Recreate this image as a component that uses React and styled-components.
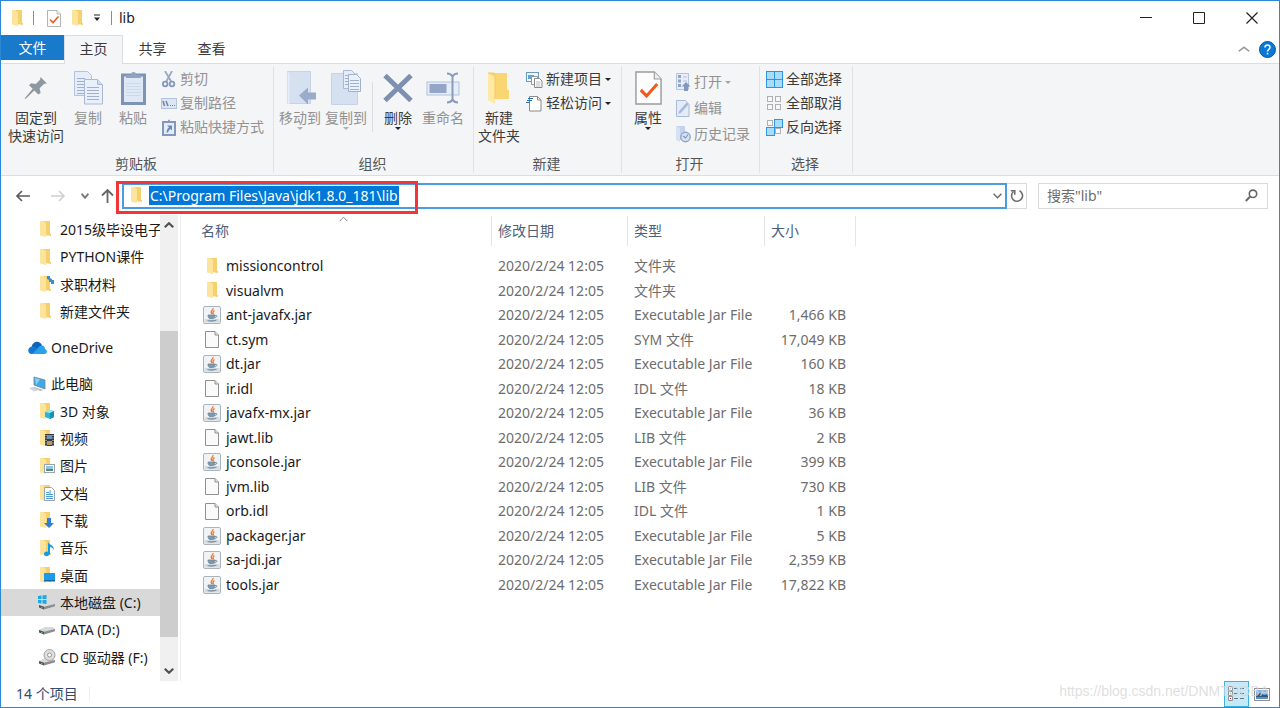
import React from "react";
import styled, { createGlobalStyle } from "styled-components";

const GlobalStyle = createGlobalStyle`
  *, *::before, *::after { box-sizing: border-box; }
  html, body { margin: 0; background: #fff; }
  body, button, input, table {
    font-family: "Noto Sans", "Noto Sans CJK SC", sans-serif;
    font-size: 14px;
    line-height: 18px;
  }
  button { border: 0; padding: 0; background: none; color: inherit; }
  svg { display: block; flex: none; }
`;

const Window = styled.div`
  display: flex;
  flex-direction: column;
  height: 100vh;
  min-height: 480px;
  border: 1px solid #2b88d8;
  background: #fff;
  color: #1a1a1a;
  overflow: hidden;
`;

/* ---------- title bar ---------- */
const TitleBar = styled.header`
  display: flex;
  align-items: center;
  height: 34px;
  padding: 0 1px 0 10px;
  flex: none;
`;
const QuickBar = styled.div`
  display: flex;
  align-items: center;
  gap: 13px;
  flex: 1;
`;
const QuickSet = styled.div`
  display: flex;
  align-items: center;
  gap: 10px;
`;
const QuickDivider = styled.span`
  width: 1px;
  height: 14px;
  background: #8c8c8c;
`;
const QuickButton = styled.button`
  display: flex;
`;
const Title = styled.h1`
  margin: 0 0 0 -3px;
  font-size: 14px;
  font-weight: 400;
  line-height: 18px;
`;
const CaptionButton = styled.button`
  display: flex;
  align-items: center;
  justify-content: center;
  width: 53px;
  height: 34px;
`;

/* ---------- tabs ---------- */
const TabRow = styled.nav`
  display: flex;
  height: 28px;
  flex: none;
  padding-right: 3px;
`;
const FileTab = styled.button`
  width: 63px;
  height: 25px;
  background: #1979ca;
  color: #fff;
`;
const Tab = styled.button`
  width: 59px;
  height: ${(p) => (p.$active ? 29 : 28)}px;
  padding-bottom: 2px;
  position: relative;
  color: #3b3b3b;
  border: 1px solid ${(p) => (p.$active ? "#dcdddf" : "transparent")};
  border-bottom: 0;
  background: ${(p) => (p.$active ? "#f4f5f7" : "transparent")};
`;
const TabTools = styled.div`
  display: flex;
  align-items: center;
  gap: 9px;
  margin-left: auto;
`;

/* ---------- ribbon ---------- */
const Ribbon = styled.section`
  display: flex;
  flex: none;
  height: 113px;
  padding: 2px 0;
  background: #f4f5f7;
  border-top: 1px solid #dcdddf;
  border-bottom: 1px solid #dcdddf;
`;
const Group = styled.div`
  display: flex;
  flex-direction: column;
  width: ${(p) => p.$width}px;
  border-right: 1px solid #e1e2e4;
`;
const GroupBody = styled.div`
  display: flex;
  flex: 1;
  padding-left: ${(p) => p.$inset || 0}px;
`;
const GroupLabel = styled.div`
  padding-right: 2px;
  line-height: 18px;
  text-align: center;
  color: #555;
`;
const BigButton = styled.button`
  display: flex;
  flex-direction: column;
  align-items: center;
  width: ${(p) => p.$width}px;
  padding-top: 4px;
  color: ${(p) => (p.$off ? "#929292" : "#3b3b3b")};
  white-space: nowrap;
`;
const BigIcon = styled.span`
  display: flex;
  align-items: center;
  justify-content: center;
  height: 36px;
  margin-bottom: 3px;
`;
const ButtonStack = styled.div`
  display: flex;
  flex-direction: column;
  align-items: flex-start;
  padding-top: ${(p) => p.$top || 1}px;
  margin-left: ${(p) => p.$left || 0}px;
`;
const SmallButton = styled.button`
  display: flex;
  align-items: center;
  gap: 3px;
  height: ${(p) => p.$height || 24}px;
  color: ${(p) => (p.$off ? "#929292" : "#3b3b3b")};
  white-space: nowrap;
`;
const InnerDivider = styled.span`
  width: 1px;
  height: 50px;
  margin: 16px 3px 0;
  background: #dcdddf;
`;

/* ---------- address row ---------- */
const AddressRow = styled.div`
  display: flex;
  align-items: center;
  flex: none;
  height: 39px;
  padding: 0 11px 0 14px;
`;
const NavButtons = styled.div`
  display: grid;
  grid-template-columns: 35px 31px 20px 13px;
  align-items: center;
  margin-right: 8px;
`;
const AddressBox = styled.div`
  position: relative;
  display: flex;
  align-items: center;
  flex: 1;
  height: 26px;
  padding: 0 3px 0 6px;
  border: 2px solid #4a9be0;
`;
const AddressInput = styled.input`
  field-sizing: content;
  height: 19px;
  margin: 0 auto 0 7px;
  padding: 0 1px;
  border: 0;
  outline: 0;
  background: #0078d7;
  color: #fff;
`;
const RedFrame = styled.div`
  position: absolute;
  left: -8px;
  top: -4px;
  width: 302px;
  height: 33px;
  border: 3px solid #f5343a;
  pointer-events: none;
`;
const RefreshButton = styled.button`
  display: flex;
  align-items: center;
  justify-content: center;
  width: 20px;
  height: 26px;
  border: 1px solid #d9d9d9;
  border-left: 0;
`;
const SearchBox = styled.label`
  display: flex;
  align-items: center;
  width: 230px;
  height: 26px;
  margin-left: 11px;
  padding: 0 9px 0 8px;
  border: 1px solid #d9d9d9;
`;
const SearchInput = styled.input`
  flex: 1;
  min-width: 0;
  padding: 0;
  border: 0;
  outline: 0;
  &::placeholder { color: #6d6d6d; opacity: 1; }
`;

/* ---------- body ---------- */
const Body = styled.main`
  display: flex;
  flex: 1;
  min-height: 0;
`;
const Sidebar = styled.aside`
  display: flex;
  width: 180px;
  flex: none;
  padding-right: 2px;
  border-right: 1px solid #f0f0f0;
`;
const Tree = styled.ul`
  flex: 1;
  min-width: 0;
  margin: 0;
  padding: 1px 0 0;
  list-style: none;
  overflow: hidden;
`;
const TreeItem = styled.li`
  display: flex;
  align-items: center;
  gap: 4px;
  height: ${(p) => (p.$tall ? 28 : 27)}px;
  margin-top: ${(p) => (p.$gap ? 9 : 0)}px;
  padding-left: ${(p) => (p.$root ? 27 : 36)}px;
  background: ${(p) => (p.$selected ? "#d9d9d9" : "transparent")};
  white-space: nowrap;
  overflow: hidden;
`;
const TreeIcon = styled.span`
  display: flex;
  justify-content: center;
  width: 19px;
  flex: none;
`;
const ScrollBar = styled.div`
  display: flex;
  flex-direction: column;
  width: 18px;
  flex: none;
  background: #f0f0f0;
`;
const ScrollArrow = styled.button`
  display: flex;
  align-items: center;
  justify-content: center;
  height: 20px;
  flex: none;
`;
const ScrollTrack = styled.div`
  display: flex;
  flex-direction: column;
  justify-content: flex-end;
  flex: 1;
  padding-bottom: 24px;
`;
const ScrollThumb = styled.div`
  height: 76%;
  background: #cdcdcd;
`;

const Files = styled.div`
  flex: 1;
  min-width: 0;
  overflow: hidden;
`;
const FileTable = styled.table`
  width: 675px;
  table-layout: fixed;
  border-collapse: collapse;
  color: #6d6d6d;
`;
const HeadCell = styled.th`
  padding: 1px 0 8px;
  font-weight: 400;
  text-align: left;
  color: #4c607a;
`;
const HeadInner = styled.div`
  position: relative;
  height: 30px;
  padding-left: ${(p) => (p.$first ? 20 : 6)}px;
  border-right: 1px solid #e5e5e5;
  line-height: 30px;
`;
const SortMark = styled.span`
  position: absolute;
  top: 0;
  left: 51%;
`;
const FileRow = styled.tr`
  height: 24px;
  &:nth-child(even) { height: 25px; }
`;
const Cell = styled.td`
  padding: 0 10px 0 6px;
  text-align: ${(p) => (p.$right ? "right" : "left")};
  white-space: nowrap;
`;
const NameCell = styled.td`
  padding: 0 0 0 21px;
  color: #1a1a1a;
`;
const NameInner = styled.div`
  display: flex;
  align-items: center;
  gap: 5px;
`;
const FileIcon = styled.span`
  display: flex;
  justify-content: center;
  width: 19px;
`;

/* ---------- status bar ---------- */
const StatusBar = styled.footer`
  position: relative;
  display: flex;
  align-items: center;
  flex: none;
  height: 26px;
  padding: 0 9px 0 15px;
  color: #33486b;
`;
const StatusDivider = styled.span`
  width: 1px;
  height: 14px;
  margin-left: 11px;
  background: #eee;
`;
const ViewButtons = styled.div`
  display: flex;
  align-items: center;
  gap: 4px;
  margin-left: auto;
`;
const ViewButton = styled.button`
  display: flex;
  align-items: center;
  justify-content: center;
  height: 26px;
  width: ${(p) => (p.$on ? 25 : 17)}px;
  background: ${(p) => (p.$on ? "#c5e9f8" : "transparent")};
  border: ${(p) => (p.$on ? "1px solid #3db2e0" : "0")};
`;
const Watermark = styled.span`
  position: absolute;
  right: 10px;
  top: 1px;
  font-family: "Liberation Sans", sans-serif;
  font-size: 14px;
  color: rgba(215, 215, 215, 0.8);
  pointer-events: none;
`;

/* ---------- icons ---------- */
const FolderShape = () => (
  <>
    <path d="M3 0h8v13h1v2l-7-1z" fill="#f5d06d" />
    <path d="M1 0h3l3 2v14L1 14.500z" fill="#fce49d" />
  </>
);
const Folder = ({ children, width = 12 }) => (
  <svg width={width} height="17" viewBox={`0 0 ${width} 17`}>
    <FolderShape />
    {children}
  </svg>
);
const BigFolder = () => (
  <svg width="24" height="32" viewBox="0 0 24 32">
    <path d="M1 1h19v17h2v9H6z" fill="#fad673" />
    <path d="M1 1l7 4v27l-7-4z" fill="#ffe9a4" />
    <path d="M1 1h6l1 4v22" fill="none" stroke="#f2cb62" />
  </svg>
);
const Caret = ({ color = "#333" }) => (
  <svg width="6" height="3" viewBox="0 0 6 3"><path d="M0 0h6L3 3z" fill={color} /></svg>
);
const Chevron = ({ dir = "down", color = "#666", size = 9, weight = 1.3 }) => (
  <svg width={size} height="6" viewBox="0 0 9 6" preserveAspectRatio="none">
    <path d={dir === "down" ? "M.6.8 4.500 4.800 8.400.8" : "M.6 5.200 4.500 1.200 8.400 5.200"} fill="none" stroke={color} strokeWidth={weight} />
  </svg>
);
const CheckDoc = ({ w = 14, h = 17 }) => (
  <svg width={w} height={h} viewBox="0 0 28 34" preserveAspectRatio="none">
    <path d="M1 1h19l7 7v25H1z" fill="#fdfdfd" stroke="#9b9b9b" strokeWidth="1.500" />
    <path d="M20 1v7h7" fill="#eee" stroke="#9b9b9b" strokeWidth="1.200" />
    <path d="M6 19l6 6 11-12" fill="none" stroke="#f05a1c" strokeWidth="3.200" />
  </svg>
);
const Pin = () => (
  <svg width="24" height="24" viewBox="0 0 24 24">
    <path d="M16.500 1 23 7.500l-2.800.3-4.600 4.500 1 4.600-2.300 1.700-4-4L1.500 23 .8 22.300 8.700 12.800 5 9.200l2-2 4.800.8 4.300-4.300z" fill="#8f979f" />
  </svg>
);
const sheetLines = (x, y, w, n, c = "#9fb0cc") =>
  Array.from({ length: n }, (_, i) => <path key={`${x}${i}`} d={`M${x} ${y + i * 3}h${w}`} stroke={c} />);
const CopyIcon = () => (
  <svg width="29" height="34" viewBox="0 0 29 34">
    <path d="M.5.5h13l4 4v20H.5z" fill="#e6edf8" stroke="#b3c3de" />
    {sheetLines(3, 7.5, 8, 6)}
    <path d="M10.500 8.500h13l5 5v19.500h-18z" fill="#e9f0fa" stroke="#a9b9d6" />
    <path d="M23.500 8.500v5h5" fill="#cfdbed" stroke="#a9b9d6" />
    {sheetLines(13, 16.5, 12, 5)}
  </svg>
);
const PasteIcon = () => (
  <svg width="25" height="34" viewBox="0 0 25 34">
    <rect x="1.500" y="4" width="22" height="28.500" fill="#dfe9f6" stroke="#7f93b5" strokeWidth="3" />
    <path d="M5 12.500h15M5 15.500h15M5 18.500h15M5 21.500h15M5 24.500h15" stroke="#cddaec" />
    <path d="M5 7V4h5a2.500 3 0 0 1 5 0h5v3z" fill="#91a3c2" />
  </svg>
);
const ScissorsIcon = () => (
  <svg width="16" height="17" viewBox="0 0 16 17">
    <path d="M4 0l6.500 11M11 0L5 11" stroke="#9aa9c4" strokeWidth="1.800" />
    <circle cx="4.200" cy="13" r="2.300" fill="none" stroke="#8497ba" strokeWidth="1.800" />
    <circle cx="11" cy="13" r="2.300" fill="none" stroke="#8497ba" strokeWidth="1.800" />
  </svg>
);
const PathIcon = () => (
  <svg width="16" height="11" viewBox="0 0 16 11">
    <rect x=".5" y=".5" width="15" height="10" fill="#dce6f4" stroke="#b5c4dd" />
    <path d="M2 3l1.500 5M5 3l2 5" stroke="#6d83aa" strokeWidth="1.500" />
    <path d="M9 7.500h1M11 7.500h1M13 7.500h1" stroke="#6d83aa" />
  </svg>
);
const ShortcutIcon = () => (
  <svg width="16" height="17" viewBox="0 0 16 17">
    <rect x="2" y="3" width="12" height="13" fill="#e3ecf8" stroke="#8297bb" strokeWidth="2" />
    <path d="M5 4V2h2a1 1.500 0 0 1 2 0h2v2z" fill="#8297bb" />
    <path d="M6 6.500h5v5L9.500 10c-1.500 1-2 2-2.500 3.500H5.500C5.500 11 6.500 9.500 8 8.500z" fill="#7188b3" />
  </svg>
);
const MoveIcon = () => (
  <svg width="31" height="34" viewBox="0 0 31 34">
    <path d="M2.500.5h23v32h-23z" fill="#d5e1f1" stroke="#c5d3e8" />
    <path d="M2.500.5l2 2v31l-2-1z" fill="#e5edf8" />
    <path d="M14 24.500l9-8v5h8v7h-8v5z" fill="#9bacca" />
  </svg>
);
const CopyToIcon = () => (
  <svg width="31" height="36" viewBox="0 0 31 36">
    <path d="M.5 3.500h26v31H.5z" fill="#d5e1f1" stroke="#c5d3e8" />
    <path d="M12.500.5h8l3 3v15h-11z" fill="#e6edf8" stroke="#a9b9d6" />
    {sheetLines(14, 5.5, 6, 4)}
    <path d="M17.500 4.500h8l4 4v13h-12z" fill="#eaf0fa" stroke="#a0b1ce" />
    {sheetLines(19, 10.5, 9, 4)}
  </svg>
);
const DeleteIcon = () => (
  <svg width="30" height="30" viewBox="0 0 30 30">
    <path d="M2 2.500l26 25M28 2.500l-26 25" stroke="#7e90b0" strokeWidth="5" />
  </svg>
);
const RenameIcon = () => (
  <svg width="34" height="32" viewBox="0 0 34 32">
    <rect x="1" y="10" width="32" height="13" fill="#e4edf8" stroke="#b2c2dc" />
    <rect x="3.500" y="12" width="17" height="9" fill="#93a6c7" />
    <path d="M21 1.500c3 0 4.500 1 5.500 3 1-2 2.500-3 5.500-3M21 30.500c3 0 4.500-1 5.500-3 1 2 2.500 3 5.500 3M26.500 4v24" fill="none" stroke="#899cbd" strokeWidth="2" />
  </svg>
);
const NewItemIcon = () => (
  <svg width="17" height="17" viewBox="0 0 17 17">
    <rect x=".5" y="1.500" width="12" height="9" fill="#eef5fa" stroke="#6f9ab5" />
    <path d="M2 4h6v4H2z" fill="#5aa6cf" />
    <path d="M5.500 5.500h6v8h-6z" fill="#fff" stroke="#999" />
    <path d="M8.500 7.500h5l2.500 2.500v6.500H8.500z" fill="#fff" stroke="#8a8a8a" />
    <path d="M10 11h4.500M10 13h4.500M10 15h4.500" stroke="#bbb" />
  </svg>
);
const EasyAccessIcon = () => (
  <svg width="17" height="17" viewBox="0 0 17 17">
    <path d="M3.500 1.500h8l3.500 3.500v11H3.500z" fill="#fff" stroke="#8a8a8a" />
    <path d="M11.500 1.500V5H15" fill="none" stroke="#8a8a8a" />
    <path d="M2 3.500h5M1 5.500h5M0 7.500h4" stroke="#2c6fa5" />
  </svg>
);
const OpenIcon = () => (
  <svg width="16" height="18" viewBox="0 0 16 18">
    <path d="M1.500.5h12v16h-12z" fill="#e7eef8" stroke="#b4c3dc" />
    <path d="M3 2h3v3H3zM3 6.500h3v3H3zM3 11h3v3H3z" fill="#8fa4c6" />
    <path d="M8 4h4M8 8h4" stroke="#b0c0da" />
    <path d="M11 9l4.500 4.500H13V18H9v-4.500H6.500z" fill="#8197bd" />
  </svg>
);
const EditIcon = () => (
  <svg width="16" height="17" viewBox="0 0 16 17">
    <path d="M1.500.5h9l3.500 3.500v12.500H1.500z" fill="#e4ecf8" stroke="#a9bad7" />
    <path d="M3 14l1-3 8-9 2 2-8 9z" fill="#a5b9db" stroke="#d9e4f4" strokeWidth=".5" />
  </svg>
);
const HistoryIcon = () => (
  <svg width="16" height="18" viewBox="0 0 16 18">
    <path d="M1 1h9v14H4z" fill="#c3d3ec" />
    <path d="M1 1l4 2v14l-4-2z" fill="#d6e2f3" />
    <circle cx="10.500" cy="12" r="4.700" fill="#d6e2f4" stroke="#91a5c8" strokeWidth="1.400" />
    <path d="M8 11l2.500 2 2.500-3.500" fill="none" stroke="#7f95bd" strokeWidth="1.200" />
  </svg>
);
const SelectIcon = ({ filled }) => (
  <svg width="17" height="17" viewBox="0 0 17 17">
    {[[0, 0], [8, 0], [0, 8], [8, 8]].map(([x, y], i) => {
      const on = filled.includes(i);
      return on ? (
        <rect key={i} x={x + 0.5} y={y + 0.5} width="8" height="8" fill="#a8dcfb" stroke="#2d96dc" />
      ) : (
        <rect key={i} x={x + 1.5} y={y + 1.5} width="5" height="5" fill="#f8f8f8" stroke="#b0b0b0" />
      );
    })}
  </svg>
);
const Arrow = ({ color, back }) => (
  <svg width="16" height="12" viewBox="0 0 16 12">
    <path d={back ? "M15 6H2M7 1L2 6l5 5" : "M1 6h13M9 1l5 5-5 5"} fill="none" stroke={color} strokeWidth="1.600" />
  </svg>
);
const UpArrow = () => (
  <svg width="13" height="15" viewBox="0 0 13 15">
    <path d="M6.500 15V2M1 7.500L6.500 2 12 7.500" fill="none" stroke="#666" strokeWidth="1.800" />
  </svg>
);
const Cloud = () => (
  <svg width="19" height="13" viewBox="0 0 19 13">
    <path d="M3.500 5.500C5 0 12-1 14 4.500L10 8z" fill="#0a64b8" />
    <path d="M4 13C-1 13-1 6 4 5.500c2-.5 4 .5 9 5L6 13z" fill="#0f79d4" />
    <path d="M10 7.500c1-4 7-4 7 .500 3 1 2 5-.5 5H4z" fill="#28a2ea" />
  </svg>
);
const Computer = () => (
  <svg width="19" height="16" viewBox="0 0 19 16">
    <path d="M6 1l11 3v9L6 9z" fill="#3ea8ea" stroke="#6c8796" strokeWidth=".8" />
    <path d="M7 2l5 1.400L8 9z" fill="#8bd0f7" />
    <path d="M6 11l9 3-2 1-8-2.500z" fill="#aab4bb" />
    <path d="M1 12.500l4-1.500 6 2.500-4 2z" fill="#ccd3d8" />
  </svg>
);
const DriveShape = ({ y = 0 }) => (
  <g transform={`translate(0 ${y})`}>
    <path d="M1 6l6-3h8l2 2.500v1.500L6 10l-5-2z" fill="#d8d9da" />
    <path d="M6 7.700L17 5v2.200L6 10.500z" fill="#8b8d8f" />
    <path d="M1 6l5 1.700v2.800L1 8.500z" fill="#4f5254" />
    <path d="M3 8.300l1.500.5" stroke="#62cf66" />
  </g>
);
const Drive = () => <svg width="18" height="12" viewBox="0 0 18 12"><DriveShape /></svg>;
const WinDrive = () => (
  <svg width="18" height="15" viewBox="0 0 18 15">
    <DriveShape y={4} />
    <path d="M0 1l3.500-.5V4H0zM4.500.4L8.500 0v4h-4zM0 5h3.500v3.500L0 8zM4.500 5h4v4l-4-.5z" fill="#1ea7e1" />
  </svg>
);
const CdDrive = () => (
  <svg width="18" height="17" viewBox="0 0 18 17">
    <DriveShape y={6} />
    <circle cx="11.500" cy="6" r="5.500" fill="#dedede" stroke="#a4a4a4" />
    <circle cx="11.500" cy="6" r="2" fill="#fff" stroke="#999" />
  </svg>
);
const FolderBadge = ({ children }) => <Folder width={16}>{children}</Folder>;
const badges = {
  link: <><path d="M8 0h3v2l2 1v3h-3V4L8 3z" fill="#3d8fd4" /><path d="M12 4h3v4h-3z" fill="#3d8fd4" /></>,
  cube: <><path d="M6 9l4-2 5 1v6l-4 2-5-2z" fill="#29b5d3" /><path d="M6 9l4-2 5 1-4 2z" fill="#a7e8f2" /><path d="M11 10v6l4-2V8z" fill="#1093b5" /></>,
  film: <><path d="M6 4h9v12H6z" fill="#333b44" /><path d="M8 5h5v4H8z" fill="#6f8fb8" /><path d="M8 11h5v4H8z" fill="#b39a59" /><path d="M7 5v11M14 5v11" stroke="#ddd" strokeDasharray="1 1.500" /></>,
  image: <><rect x="5.500" y="6.500" width="10" height="8" fill="#fff" stroke="#9aa4ab" /><path d="M7 8h7v3H7z" fill="#8fc6e8" /><path d="M7 11h7v2H7z" fill="#598a78" /></>,
  doc: <><path d="M5.500 2.500h7l3 3v10h-10z" fill="#fff" stroke="#97a3ac" /><path d="M7 7.500h3M7 9.500h7M7 11.500h7M7 13.500h7M11 5v4" stroke="#4a9ad4" /></>,
  down: <path d="M8 6h4v5h3l-5 5-5-5h3z" fill="#2d7fd0" />,
  note: <path d="M9 2c1 3 6 3 6 8-1-2-3-3-4-3v6c0 4-6 4-6 1 0-2 2-3 4-2z" fill="#159be6" />,
  desk: <><path d="M5 6h11v8H5z" fill="#1b9ae8" /><path d="M5 13h11v1.500H5z" fill="#1765a5" /></>,
};
const JarIcon = () => (
  <svg width="18" height="18" viewBox="0 0 18 18">
    <rect x=".5" y=".5" width="17" height="17" rx="1.500" fill="#f0f3f5" stroke="#a9b4bc" />
    <path d="M1.500 13h15v3.500h-15z" fill="#d3dbe0" />
    <path d="M10 2c1 2-4 3-1 6M11.500 4.500c-2 1-2 2-1 4" fill="none" stroke="#ec7b35" strokeWidth="1.300" />
    <path d="M5 9h7c0 2-.5 3-1.500 3.500h-4C5.500 12 5 11 5 9zM4.500 14.500c2 1 6 1 9-.500" fill="#7f98ab" stroke="#6c8799" strokeWidth=".8" />
    <path d="M12 9.500c3-.5 2 2-.5 2.500" fill="none" stroke="#6c8799" />
  </svg>
);
const PageIcon = () => (
  <svg width="14" height="17" viewBox="0 0 14 17">
    <path d="M.5.5h9.500l3.500 3.500v12.500H.5z" fill="#fafafa" stroke="#919191" />
    <path d="M10 .5V4h3.500" fill="#e4e4e4" stroke="#919191" />
  </svg>
);
const Magnifier = () => (
  <svg width="13" height="13" viewBox="0 0 13 13">
    <circle cx="8" cy="4.800" r="3.700" fill="none" stroke="#666" strokeWidth="1.600" />
    <path d="M5.200 7.500L.8 12" stroke="#666" strokeWidth="1.900" />
  </svg>
);
const RefreshIcon = () => (
  <svg width="14" height="14" viewBox="0 0 14 14">
    <path d="M9.500 1.800A5.500 5.500 0 1 1 3.500 2.500" fill="none" stroke="#6c6c6c" strokeWidth="1.600" />
    <path d="M.8 1.800h4v4" fill="none" stroke="#6c6c6c" strokeWidth="1.500" />
  </svg>
);
const HelpIcon = () => (
  <svg width="17" height="17" viewBox="0 0 17 17">
    <circle cx="8.500" cy="8.500" r="8" fill="#0a78d6" stroke="#075aa5" />
    <path d="M6 6.500c0-3.300 5-3.300 5 0 0 1.700-2.500 2-2.500 4M8.500 11.800v1.700" fill="none" stroke="#e6f2fc" strokeWidth="1.600" />
  </svg>
);

const treeItems = [
  { label: "2015级毕设电子", icon: <Folder width={16} /> },
  { label: "PYTHON课件", icon: <Folder width={16} />, tall: true },
  { label: "求职材料", icon: <FolderBadge>{badges.link}</FolderBadge> },
  { label: "新建文件夹", icon: <Folder width={16} /> },
  { label: "OneDrive", icon: <Cloud />, root: true, gap: true },
  { label: "此电脑", icon: <Computer />, root: true, gap: true, tall: true },
  { label: "3D 对象", icon: <FolderBadge>{badges.cube}</FolderBadge> },
  { label: "视频", icon: <FolderBadge>{badges.film}</FolderBadge> },
  { label: "图片", icon: <FolderBadge>{badges.image}</FolderBadge>, tall: true },
  { label: "文档", icon: <FolderBadge>{badges.doc}</FolderBadge> },
  { label: "下载", icon: <FolderBadge>{badges.down}</FolderBadge> },
  { label: "音乐", icon: <FolderBadge>{badges.note}</FolderBadge>, tall: true },
  { label: "桌面", icon: <FolderBadge>{badges.desk}</FolderBadge> },
  { label: "本地磁盘 (C:)", icon: <WinDrive />, selected: true },
  { label: "DATA (D:)", icon: <Drive />, tall: true },
  { label: "CD 驱动器 (F:)", icon: <CdDrive /> },
];

const JAR = "Executable Jar File";
const files = [
  ["missioncontrol", "文件夹", ""],
  ["visualvm", "文件夹", ""],
  ["ant-javafx.jar", JAR, "1,466 KB"],
  ["ct.sym", "SYM 文件", "17,049 KB"],
  ["dt.jar", JAR, "160 KB"],
  ["ir.idl", "IDL 文件", "18 KB"],
  ["javafx-mx.jar", JAR, "36 KB"],
  ["jawt.lib", "LIB 文件", "2 KB"],
  ["jconsole.jar", JAR, "399 KB"],
  ["jvm.lib", "LIB 文件", "730 KB"],
  ["orb.idl", "IDL 文件", "1 KB"],
  ["packager.jar", JAR, "5 KB"],
  ["sa-jdi.jar", JAR, "2,359 KB"],
  ["tools.jar", JAR, "17,822 KB"],
];
const iconFor = (type) => (type === "文件夹" ? <Folder /> : type === JAR ? <JarIcon /> : <PageIcon />);

const Big = ({ icon, lines, width, off, caret }) => (
  <BigButton $width={width} $off={off} disabled={off}>
    <BigIcon>{icon}</BigIcon>
    {lines.map((line) => <span key={line}>{line}</span>)}
    {caret && <Caret color={off ? "#b0b0b0" : "#222"} />}
  </BigButton>
);
const Small = ({ icon, label, off, caret, height }) => (
  <SmallButton $off={off} $height={height} disabled={off}>
    {icon}
    <span>{label}</span>
    {caret && <Caret color={off ? "#a5a5a5" : "#222"} />}
  </SmallButton>
);

export default function App() {
  return (
    <Window>
      <GlobalStyle />
      <TitleBar>
        <QuickBar>
          <QuickSet>
            <Folder />
            <QuickDivider />
          </QuickSet>
          <QuickSet>
            <QuickButton aria-label="属性"><CheckDoc /></QuickButton>
            <QuickButton aria-label="新建文件夹"><Folder /></QuickButton>
            <QuickButton aria-label="自定义快速访问工具栏">
              <svg width="8" height="8" viewBox="0 0 8 8"><path d="M1 1h6" stroke="#222" /><path d="M1 3.500h6l-3 3.500z" fill="#222" /></svg>
            </QuickButton>
            <QuickDivider />
            <Title>lib</Title>
          </QuickSet>
        </QuickBar>
        <CaptionButton aria-label="最小化">
          <svg width="12" height="12" viewBox="0 0 12 12"><path d="M0 5.500h12" stroke="#222" /></svg>
        </CaptionButton>
        <CaptionButton aria-label="最大化">
          <svg width="12" height="12" viewBox="0 0 12 12"><path d="M.5.5h11v11H.5z" fill="none" stroke="#222" /></svg>
        </CaptionButton>
        <CaptionButton aria-label="关闭">
          <svg width="12" height="12" viewBox="0 0 12 12"><path d="M.5.5l11 11M11.500.5l-11 11" stroke="#222" strokeWidth="1.200" /></svg>
        </CaptionButton>
      </TitleBar>

      <TabRow>
        <FileTab>文件</FileTab>
        <Tab $active>主页</Tab>
        <Tab>共享</Tab>
        <Tab>查看</Tab>
        <TabTools>
          <QuickButton aria-label="最小化功能区"><Chevron dir="up" size={12} color="#999" /></QuickButton>
          <QuickButton aria-label="帮助"><HelpIcon /></QuickButton>
        </TabTools>
      </TabRow>

      <Ribbon>
        <Group $width={273}>
          <GroupBody $inset={5}>
            <Big icon={<Pin />} lines={["固定到", "快速访问"]} width={60} />
            <Big icon={<CopyIcon />} lines={["复制"]} width={44} off />
            <Big icon={<PasteIcon />} lines={["粘贴"]} width={46} off />
            <ButtonStack $left={5}>
              <Small icon={<ScissorsIcon />} label="剪切" off />
              <Small icon={<PathIcon />} label="复制路径" off />
              <Small icon={<ShortcutIcon />} label="粘贴快捷方式" off />
            </ButtonStack>
          </GroupBody>
          <GroupLabel>剪贴板</GroupLabel>
        </Group>
        <Group $width={200}>
          <GroupBody $inset={3}>
            <Big icon={<MoveIcon />} lines={["移动到"]} width={46} off caret />
            <Big icon={<CopyToIcon />} lines={["复制到"]} width={46} off caret />
            <InnerDivider />
            <Big icon={<DeleteIcon />} lines={["删除"]} width={44} caret />
            <Big icon={<RenameIcon />} lines={["重命名"]} width={46} off />
          </GroupBody>
          <GroupLabel>组织</GroupLabel>
        </Group>
        <Group $width={148}>
          <GroupBody>
            <Big icon={<BigFolder />} lines={["新建", "文件夹"]} width={50} />
            <ButtonStack $left={2}>
              <Small icon={<NewItemIcon />} label="新建项目" caret />
              <Small icon={<EasyAccessIcon />} label="轻松访问" caret />
            </ButtonStack>
          </GroupBody>
          <GroupLabel>新建</GroupLabel>
        </Group>
        <Group $width={138}>
          <GroupBody>
            <Big icon={<CheckDoc w={27} h={34} />} lines={["属性"]} width={52} caret />
            <ButtonStack $left={1} $top={3}>
              <Small icon={<OpenIcon />} label="打开" height={26} off caret />
              <Small icon={<EditIcon />} label="编辑" height={26} off />
              <Small icon={<HistoryIcon />} label="历史记录" height={26} off />
            </ButtonStack>
          </GroupBody>
          <GroupLabel>打开</GroupLabel>
        </Group>
        <Group $width={93}>
          <GroupBody $inset={6}>
            <ButtonStack>
              <Small icon={<SelectIcon filled={[0, 1, 2, 3]} />} label="全部选择" />
              <Small icon={<SelectIcon filled={[]} />} label="全部取消" />
              <Small icon={<SelectIcon filled={[1, 2]} />} label="反向选择" />
            </ButtonStack>
          </GroupBody>
          <GroupLabel>选择</GroupLabel>
        </Group>
      </Ribbon>

      <AddressRow>
        <NavButtons>
          <QuickButton aria-label="后退"><Arrow back color="#5a5a5a" /></QuickButton>
          <QuickButton aria-label="前进"><Arrow color="#cfcfcf" /></QuickButton>
          <QuickButton aria-label="最近浏览的位置"><Chevron size={8} weight={2} color="#777" /></QuickButton>
          <QuickButton aria-label="上移"><UpArrow /></QuickButton>
        </NavButtons>
        <AddressBox>
          <Folder />
          <AddressInput aria-label="地址" defaultValue="C:\Program Files\Java\jdk1.8.0_181\lib" />
          <QuickButton aria-label="以前的位置"><Chevron /></QuickButton>
          <RedFrame />
        </AddressBox>
        <RefreshButton aria-label="刷新"><RefreshIcon /></RefreshButton>
        <SearchBox>
          <SearchInput aria-label="搜索" placeholder={'搜索"lib"'} />
          <Magnifier />
        </SearchBox>
      </AddressRow>

      <Body>
        <Sidebar>
          <Tree>
            {treeItems.map((t) => (
              <TreeItem key={t.label} $root={t.root} $gap={t.gap} $tall={t.tall} $selected={t.selected}>
                <TreeIcon>{t.icon}</TreeIcon>
                <span>{t.label}</span>
              </TreeItem>
            ))}
          </Tree>
          <ScrollBar>
            <ScrollArrow aria-label="向上滚动"><Chevron dir="up" size={10} weight={2} color="#505050" /></ScrollArrow>
            <ScrollTrack><ScrollThumb /></ScrollTrack>
            <ScrollArrow aria-label="向下滚动"><Chevron size={10} weight={2} color="#505050" /></ScrollArrow>
          </ScrollBar>
        </Sidebar>
        <Files>
          <FileTable>
            <colgroup>
              <col width="311" />
              <col width="136" />
              <col width="137" />
              <col width="91" />
            </colgroup>
            <thead>
              <tr>
                <HeadCell>
                  <HeadInner $first>
                    名称
                    <SortMark><Chevron dir="up" color="#888" weight={1} /></SortMark>
                  </HeadInner>
                </HeadCell>
                <HeadCell><HeadInner>修改日期</HeadInner></HeadCell>
                <HeadCell><HeadInner>类型</HeadInner></HeadCell>
                <HeadCell><HeadInner>大小</HeadInner></HeadCell>
              </tr>
            </thead>
            <tbody>
              {files.map(([name, type, size]) => (
                <FileRow key={name}>
                  <NameCell>
                    <NameInner>
                      <FileIcon>{iconFor(type)}</FileIcon>
                      <span>{name}</span>
                    </NameInner>
                  </NameCell>
                  <Cell>2020/2/24 12:05</Cell>
                  <Cell>{type}</Cell>
                  <Cell $right>{size}</Cell>
                </FileRow>
              ))}
            </tbody>
          </FileTable>
        </Files>
      </Body>

      <StatusBar>
        <span>14 个项目</span>
        <StatusDivider />
        <ViewButtons>
          <ViewButton $on aria-label="详细信息">
            <svg width="17" height="16" viewBox="0 0 17 16">
              <path d="M.5.5h4v4h-4zM.5 5.500h4v4h-4zM.5 10.500h4v4h-4z" fill="#fff" stroke="#8a969c" />
              <path d="M2 2h1v1H2z" fill="#3a70b0" /><path d="M2 7h1v1H2z" fill="#3a9050" /><path d="M2 12h1v1H2z" fill="#d03020" />
              <path d="M6 2.500h4M12 2.500h4M6 7.500h4M12 7.500h4M6 12.500h4M12 12.500h4" stroke="#68757c" />
            </svg>
          </ViewButton>
          <ViewButton aria-label="大图标">
            <svg width="16" height="13" viewBox="0 0 16 13">
              <rect x=".5" y=".5" width="15" height="12" fill="#fff" stroke="#8f8f8f" />
              <path d="M2 2h12v5H2z" fill="#7fb6ea" /><path d="M2 7l4-2 4 2 4-1v5H2z" fill="#33597a" /><path d="M2 9h12v2H2z" fill="#5b8fc0" />
            </svg>
          </ViewButton>
        </ViewButtons>
        <Watermark>https://blog.csdn.net/DNMTOOBA</Watermark>
      </StatusBar>
    </Window>
  );
}
